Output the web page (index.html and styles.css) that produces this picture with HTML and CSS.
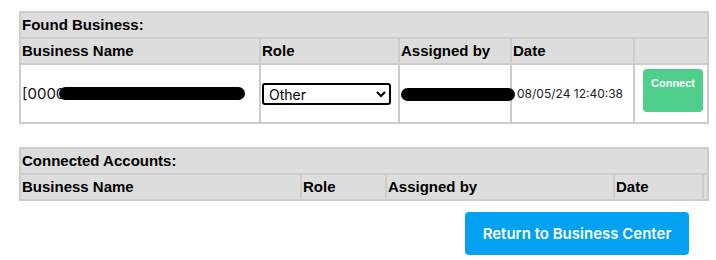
FILE: index.html
```html
<!DOCTYPE html>
<html>
<head>
<meta charset="utf-8">
<link rel="stylesheet" href="styles.css">
</head>
<body>
<div class="page">
  <table class="grid found">
    <colgroup>
      <col class="f1"><col class="f2"><col class="f3"><col class="f4"><col class="f5">
    </colgroup>
    <tr><th colspan="5" class="cap">Found Business:</th></tr>
    <tr><th>Business Name</th><th>Role</th><th>Assigned by</th><th>Date</th><th></th></tr>
    <tr class="data">
      <td><span class="name">[0000<span class="redact r1"></span></span></td>
      <td><select class="role"><option>Other</option></select></td>
      <td><span class="redact r2"></span></td>
      <td class="date">08/05/24 12:40:38</td>
      <td class="act"><button class="connect">Connect</button></td>
    </tr>
  </table>

  <table class="grid connected">
    <colgroup>
      <col class="c1"><col class="c2"><col class="c3"><col class="c4"><col class="c5">
    </colgroup>
    <tr><th colspan="5" class="cap">Connected Accounts:</th></tr>
    <tr><th>Business Name</th><th>Role</th><th>Assigned by</th><th>Date</th><th></th></tr>
  </table>

  <div class="actions">
    <button class="return">Return to Business Center</button>
  </div>
</div>
</body>
</html>
```

FILE: styles.css
```css
html, body {
  margin: 0;
  padding: 0;
  background: #fff;
}
body {
  font-family: Inter, "Liberation Sans", sans-serif;
  color: #000;
}
.page {
  padding: 11px 7px 0 19px;
}
.grid {
  width: 690px;
  table-layout: fixed;
  border-collapse: separate;
  border-spacing: 2px;
  background: #cccccc;
}
.grid th {
  background: #dddddd;
  font-family: "Liberation Sans", Arial, sans-serif;
  font-weight: bold;
  font-size: 15px;
  text-align: left;
  padding: 0 1px;
  height: 24px;
  line-height: 18px;
  color: #000;
}
.grid td {
  background: #fff;
  padding: 0 1px;
  font-size: 15px;
}
.f1 { width: 238px; }
.f2 { width: 137px; }
.f3 { width: 110px; }
.f4 { width: 121px; }
.f5 { width: 72px; }
.c1 { width: 279px; }
.c2 { width: 83px; }
.c3 { width: 226px; }
.c4 { width: 87px; }
.c5 { width: 3px; }
.grid .data td {
  height: 55px;
  vertical-align: middle;
}
.name {
  display: flex;
  align-items: center;
  font-size: 15px;
  color: #111;
  white-space: nowrap;
}
.redact {
  display: inline-block;
  background: #000;
  border-radius: 7px;
}
.r1 {
  width: 186px;
  height: 13px;
  margin-left: -6px;
}
.r2 {
  width: 114px;
  height: 13px;
  vertical-align: middle;
}
.role {
  width: 129px;
  height: 22px;
  border: 2px solid #000;
  border-radius: 3px;
  background: #fff;
  font-family: Inter, sans-serif;
  font-size: 14px;
  padding: 0 0 0 1px;
  color: #000;
}
.grid .data .date {
  font-family: Inter, sans-serif;
  font-size: 12px;
  color: #222;
  white-space: nowrap;
  padding-left: 5px;
}
.grid .data .act {
  vertical-align: top;
  padding-top: 2px;
}
.connect {
  width: 60px;
  height: 43px;
  background: #50ce8b;
  color: #fff;
  border: none;
  border-radius: 4px;
  font-family: "Liberation Sans", Arial, sans-serif;
  font-weight: bold;
  font-size: 11px;
  padding: 8px 0 0;
  display: flex;
  align-items: flex-start;
  justify-content: center;
  margin: 2px 0 0 7px;
}
.connected {
  margin-top: 23px;
}
.actions {
  display: flex;
  justify-content: flex-end;
  padding-right: 20px;
  margin-top: 11px;
}
.return {
  width: 224px;
  height: 43px;
  background: #03a1f2;
  color: #fff;
  border: none;
  border-radius: 4px;
  font-family: Inter, sans-serif;
  font-weight: 600;
  font-size: 15px;
}
```
